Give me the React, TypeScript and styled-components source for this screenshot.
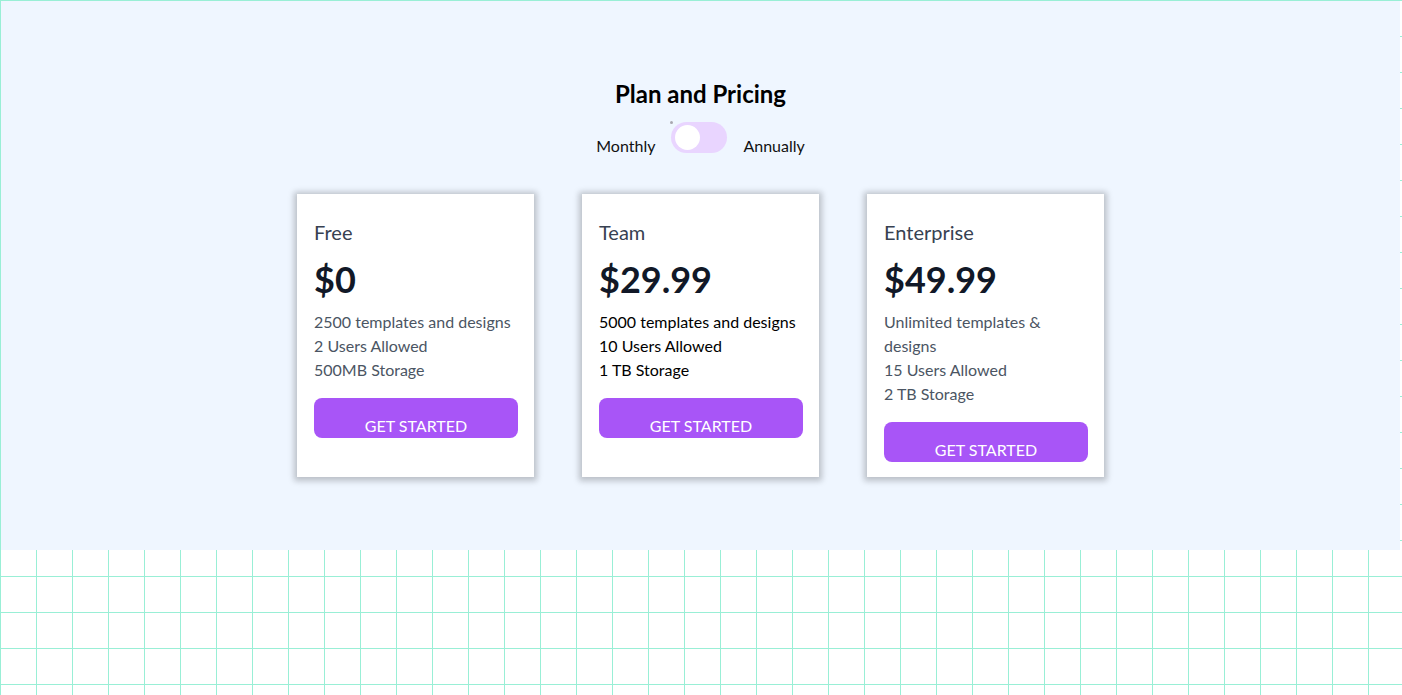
import * as React from "react";
import styled, { createGlobalStyle } from "styled-components";

const GlobalStyle = createGlobalStyle`
  html, body {
    margin: 0;
    padding: 0;
  }
  body {
    font-family: Lato, "Noto Sans", sans-serif;
    background-color: #ffffff;
    background-image:
      linear-gradient(to right, #99efd6 1px, transparent 1px),
      linear-gradient(to bottom, #99efd6 1px, transparent 1px);
    background-size: 36px 36px;
    min-height: 695px;
  }
`;

const Panel = styled.section`
  margin: 1px 2px 0 1px;
  height: 549px;
  box-sizing: border-box;
  background: #eff6ff;
  padding-top: 77px;
  display: flex;
  flex-direction: column;
  align-items: center;
`;

const Heading = styled.h1`
  margin: 0;
  font-size: 24px;
  line-height: 32px;
  font-weight: 700;
  color: #000;
`;

const ToggleRow = styled.div`
  display: flex;
  align-items: flex-start;
  gap: 16px;
  margin-top: 12px;
`;

const ToggleLabel = styled.span`
  margin-top: 12px;
  font-size: 16px;
  line-height: 24px;
  color: #111;
`;

const Switch = styled.div<{ on: boolean }>`
  position: relative;
  width: 56px;
  height: 31px;
  border-radius: 16px;
  background: #e9d5ff;
  cursor: pointer;
`;

const Knob = styled.span<{ on: boolean }>`
  position: absolute;
  top: 3px;
  left: ${({ on }) => (on ? "29px" : "4px")};
  width: 25px;
  height: 25px;
  border-radius: 50%;
  background: #fff;
`;

const Dot = styled.span`
  position: absolute;
  top: -1px;
  left: -1px;
  width: 3px;
  height: 3px;
  border-radius: 50%;
  background: #a8a8b0;
`;

const Cards = styled.div`
  display: flex;
  gap: 48px;
  margin-top: 36px;
`;

const Card = styled.div`
  width: 237px;
  box-sizing: border-box;
  background: #fff;
  padding: 24px 16px 15px 17px;
  box-shadow: 0 1px 6px 3px rgba(0, 0, 0, 0.22);
  display: flex;
  flex-direction: column;
`;

const PlanName = styled.h2`
  margin: 0;
  font-size: 20px;
  line-height: 28px;
  font-weight: 400;
  color: #374151;
`;

const Price = styled.div`
  margin-top: 13px;
  font-size: 36px;
  line-height: 40px;
  font-weight: 700;
  color: #111827;
`;

const Features = styled.ul<{ dark?: boolean }>`
  list-style: none;
  margin: 11px 0 0;
  padding: 0;
  font-size: 16px;
  line-height: 24px;
  color: ${({ dark }) => (dark ? "#000" : "#4b5563")};
`;

const Button = styled.button`
  margin-top: 16px;
  height: 40px;
  width: 100%;
  border: none;
  border-radius: 8px;
  background: #a855f7;
  color: #fff;
  font-family: inherit;
  font-size: 16px;
  line-height: 24px;
  padding: 16px 0 0;
  display: flex;
  justify-content: center;
  align-items: flex-start;
  cursor: pointer;
`;

const plans = [
  {
    name: "Free",
    price: "$0",
    features: ["2500 templates and designs", "2 Users Allowed", "500MB Storage"],
  },
  {
    name: "Team",
    price: "$29.99",
    features: ["5000 templates and designs", "10 Users Allowed", "1 TB Storage"],
    dark: true,
  },
  {
    name: "Enterprise",
    price: "$49.99",
    features: ["Unlimited templates & designs", "15 Users Allowed", "2 TB Storage"],
  },
];

const App = () => {
  const [annual, setAnnual] = React.useState(false);

  return (
    <>
      <GlobalStyle />
      <Panel>
        <Heading>Plan and Pricing</Heading>
        <ToggleRow>
          <ToggleLabel>Monthly</ToggleLabel>
          <Switch on={annual} onClick={() => setAnnual(!annual)}>
            <Dot />
            <Knob on={annual} />
          </Switch>
          <ToggleLabel>Annually</ToggleLabel>
        </ToggleRow>
        <Cards>
          {plans.map((p) => (
            <Card key={p.name}>
              <PlanName>{p.name}</PlanName>
              <Price>{p.price}</Price>
              <Features dark={p.dark}>
                {p.features.map((f) => (
                  <li key={f}>{f}</li>
                ))}
              </Features>
              <Button>GET STARTED</Button>
            </Card>
          ))}
        </Cards>
      </Panel>
    </>
  );
};

export default App;
